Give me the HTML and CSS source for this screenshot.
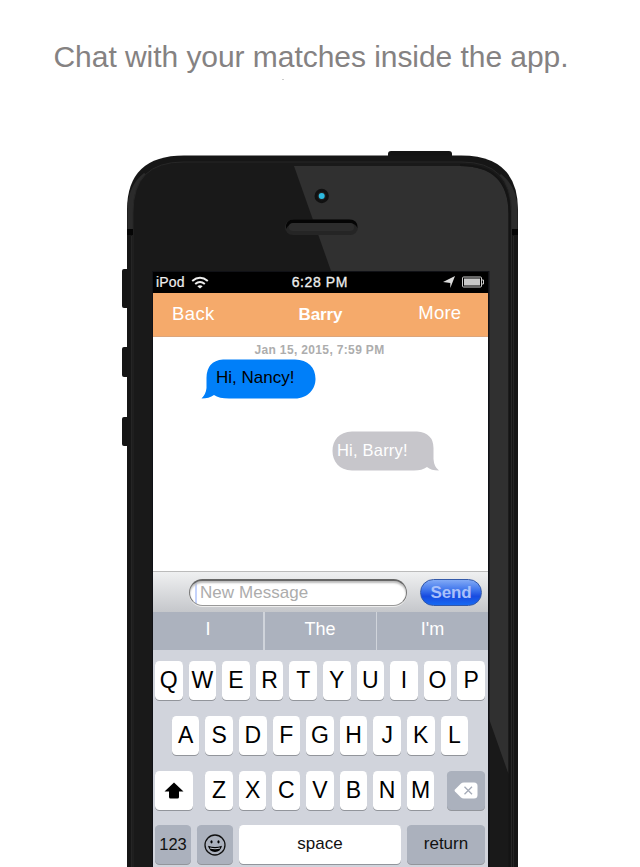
FILE: index.html
```html
<!DOCTYPE html>
<html lang="en">
<head>
<meta charset="utf-8">
<title>Chat</title>
<link rel="stylesheet" href="styles.css">
</head>
<body>
<h1 class="headline"><span>Chat with your matches inside the app.</span></h1>
<main class="phone">
  <svg class="case" width="400" height="717" viewBox="120 150 400 717" aria-hidden="true">
    <rect x="388" y="151" width="64" height="10" rx="3" fill="#141414"/>
    <g fill="#151515"><rect x="122" y="269" width="8" height="39" rx="2"/><rect x="122" y="347" width="8" height="30" rx="2"/><rect x="122" y="417" width="8" height="29" rx="2"/></g>
    <path d="M127 900V210Q127 155.500 184 155.500H461Q518 155.500 518 210V900Z" fill="#161616"/>
    <path d="M127.500 231V210Q127.500 186 144 173L149 176Q133 190 133 211V231ZM517.500 231V210Q517.500 187 501 174L497 178Q511 190 511 211V231Z" fill="#2b2b2b"/>
    <path d="M133 900V212Q133 162 183 162H462Q511.500 162 511.500 212V900" fill="#191919" stroke="#272727" stroke-width="1"/>
    <path d="M294 166H460Q508.500 166 508.500 213V774Z" fill="#303030"/>
    <path d="M460 165Q509 165 509.500 213V867" fill="none" stroke="#141414" stroke-width="2"/>
    <path d="M127 229h6v6h-6zM512 229h6v6h-6z" fill="#050505"/>
    <path d="M131.500 236V867M513.500 236V867" stroke="#252525"/>
    <rect x="285" y="219.500" width="73" height="15.500" rx="7.700" fill="#252525"/>
    <path d="M286 229Q285 219.500 294 219.500H349Q358 219.500 357.500 228Q355 223 349 223H295Q289 223 286 229Z" fill="#050505"/>
    <rect x="289" y="223" width="65" height="8" rx="4" fill="#2d2d2d"/>
    <circle cx="321.700" cy="196" r="7.200" fill="#111"/><circle cx="321.700" cy="196" r="4.300" fill="#202020"/><circle cx="321.700" cy="196" r="3" fill="#2ebbe0"/>
    <path d="M152 271H489.500V867H152Z" fill="#101116"/>
  </svg>
  <div class="screen">
    <div class="status">
      <span class="carrier">iPod</span>
      <svg class="wifi" width="18" height="13" viewBox="0 0 18 13"><g fill="none" stroke="#eee" stroke-width="2"><path d="M1.200 4.900Q9-1.500 16.800 4.900"/><path d="M4.200 8Q9 4 13.800 8"/></g><path d="M6.300 10.200Q9 8.200 11.700 10.200L9 12.600Z" fill="#eee"/></svg>
      <span class="clock">6:28 PM</span>
      <svg class="arrow" width="12" height="12" viewBox="0 0 12 12"><path d="M12 0L7.300 12V7L0 6Z" fill="#ddd"/></svg>
      <svg class="battery" width="23" height="12" viewBox="0 0 23 12"><rect x=".5" y="1" width="19" height="10" rx="1" fill="none" stroke="#ccc"/><rect x="2" y="2.500" width="16" height="7" fill="#c8c8c8"/><path d="M20 4h1.500v4H20" fill="none" stroke="#ccc"/></svg>
    </div>
    <header class="nav"><span class="back">Back</span><b><span>Barry</span></b><span class="more">More</span></header>
    <section class="messages">
      <time>Jan 15, 2015, 7:59 PM</time>
      <div class="bubble left">
        <svg width="116" height="40" viewBox="0 0 116 40"><path d="M22 .5Q5.500 2 5.500 19V29Q5 35 .5 39.500Q8 39.500 13 36Q18 39.500 28 39.500H94C107 39.500 114.500 30 114.500 20C114.500 8 107 1 94 .5Z" fill="#007ff9"/></svg>
        <span>Hi, Nancy!</span>
      </div>
      <div class="bubble right">
        <svg width="108" height="40" viewBox="0 0 108 40"><path d="M20 .5H85Q101.500 2 101.500 17V28Q102 36 107 39.500Q99 39.500 95 36Q90 39.500 82 39.500H20C7 39.500 .5 30 .5 20C.5 9 7 1 20 .5Z" fill="#c7c6cb"/></svg>
        <span>Hi, Barry!</span>
      </div>
    </section>
    <div class="composer"><div class="field"><span>New Message</span></div><div class="send"><span>Send</span></div></div>
    <div class="suggest"><span>I</span><span>The</span><span>I'm</span></div>
    <div class="keyboard">
      <div class="row"><i>Q</i><i>W</i><i>E</i><i>R</i><i>T</i><i>Y</i><i>U</i><i>I</i><i>O</i><i>P</i></div>
      <div class="row second"><i>A</i><i>S</i><i>D</i><i>F</i><i>G</i><i>H</i><i>J</i><i>K</i><i>L</i></div>
      <div class="row">
        <i class="shift"><svg width="20" height="17" viewBox="0 0 20 17"><path d="M10 .5L19.500 9.500H15V15Q15 16.500 13.500 16.500H6.500Q5 16.500 5 15V9.500H.5Z"/></svg></i>
        <i>Z</i><i>X</i><i>C</i><i>V</i><i>B</i><i>N</i><i>M</i>
        <i class="erase gray"><svg width="24" height="17" viewBox="0 0 24 17"><path d="M7 1.500Q8 .5 10 .5H20Q23.500 .5 23.500 4V13Q23.500 16.500 20 16.500H10Q8 16.500 7 15.500L1 9.500Q0 8.500 1 7.500Z" fill="#fff"/><path d="M10.500 4.800l7.500 7.500m0-7.500l-7.500 7.500" stroke="#a5abb8" stroke-width="1.300"/></svg></i>
      </div>
      <div class="row">
        <i class="gray wide small digits">123</i>
        <i class="gray wide"><svg width="22" height="22" viewBox="0 0 22 22"><circle cx="11" cy="11" r="10" fill="none" stroke="#111" stroke-width="1.300"/><ellipse cx="7.500" cy="7.800" rx="1.100" ry="1.600"/><ellipse cx="14.500" cy="7.800" rx="1.100" ry="1.600"/><path d="M4 11.800Q11 14.200 18 11.800Q16.500 18 11 18T4 11.800Z"/><path d="M6 14Q11 15.500 16 14" fill="none" stroke="#c3c7cf" stroke-width="1.200"/></svg></i>
        <i class="space small">space</i><i class="gray return small">return</i>
      </div>
    </div>
  </div>
</main>
</body>
</html>
```
FILE: styles.css
```css
* { box-sizing: border-box; }
html, body { margin: 0; height: 867px; overflow: hidden; }
body { background: #fff; font-family: "Liberation Sans", Arial, sans-serif; }
svg { display: block; flex: none; }
.headline { margin: 0; height: 155px; padding: 40px 0 0 53.500px; font-size: 30px; line-height: 34px; font-weight: 400; color: #858282; letter-spacing: -.05px; white-space: nowrap; }
.headline::after { content: ""; display: block; width: 2px; height: 1px; margin: 5px 0 0 228px; background: #ccc; }
.phone { position: relative; width: 391px; height: 712px; margin-left: 127px; padding: 117px 30px 0 26px; }
.case { position: absolute; left: -7px; top: -5px; }
.screen { position: relative; width: 335px; height: 595px; overflow: hidden; background: #fff; }
.status { display: flex; align-items: center; height: 21px; background: #000; color: #eee; font-size: 14px; padding: 0 3px 1px; }
.carrier { width: 35px; letter-spacing: .2px; -webkit-text-stroke: .2px #eee; }
.clock { margin-left: 83px; width: 58px; white-space: nowrap; letter-spacing: .6px; -webkit-text-stroke: .3px #eee; }
.arrow { margin-left: 94px; }
.battery { margin-left: 7px; }
.nav { display: grid; grid-template-columns: 1fr 1fr 1fr; height: 44px; background: #f5aa6b; border-bottom: 1px solid #dda57a; color: #fff; line-height: 42px; font-size: 18.500px; }
.nav b { text-align: center; font-size: 17px; line-height: 43px; letter-spacing: -.1px; }
.back { padding-left: 19px; letter-spacing: .4px; }
.more { padding-left: 42px; line-height: 40px; letter-spacing: .2px; }
.messages { height: 234px; padding-top: 6px; }
time { display: block; text-align: center; height: 16px; line-height: 14px; font-size: 12px; font-weight: 700; color: #adadad; letter-spacing: .35px; padding-right: 2px; }
.bubble { position: relative; height: 40px; font-size: 17px; }
.bubble span { position: absolute; top: 9px; left: 15px; line-height: 20px; white-space: nowrap; }
.left { width: 116px; margin-left: 48px; color: #000; }
.right { width: 108px; margin: 32px 0 0 179px; color: #fff; }
.right span { left: 5px; font-size: 16.500px; letter-spacing: .2px; }
.composer { height: 41px; display: flex; align-items: flex-start; padding: 7px 6px 0 36px; border-top: 1px solid #bbb; background: linear-gradient(#eff0f1, #c5c7cb); }
.field { width: 218px; height: 27px; border: 1px solid #777; border-top: 2px solid #666; border-bottom-color: #999; border-radius: 13.500px; background: linear-gradient(90deg, transparent 5px, #c5d3fb 5px, #c5d3fb 7px, transparent 7px) #fff; box-shadow: inset 0 2px 2px #bbb, 0 1px #eee; padding-left: 10px; line-height: 23px; font-size: 17px; letter-spacing: .05px; color: #acacac; }
.send { width: 62px; height: 27px; margin-left: 13px; border: 1px solid #3359a9; border-radius: 14px; background: linear-gradient(#82aaf6, #3f75ec 40%, #174be0 65%, #1769f2); color: #a9c0fa; font-size: 17px; font-weight: 700; text-align: center; line-height: 25px; letter-spacing: -.2px; }
.suggest { display: grid; grid-template-columns: 110px 111px 1fr; gap: 1.500px; height: 38px; background: #d0d4db; }
.suggest span { background: #acb2be; color: #fff; text-align: center; line-height: 34px; font-size: 18px; }
.keyboard { height: 217px; background: #d1d4dc; padding: 11px 2px 0; }
.row { display: flex; gap: 6px; height: 39px; margin-bottom: 15.800px; padding: 0; }
.row i { flex: none; width: 27.600px; height: 39px; display: flex; align-items: center; justify-content: center; border-radius: 4.500px; background: #fff; box-shadow: 0 1px 0 #92959b; color: #000; font-style: normal; font-size: 23px; }
.second { padding-left: 16.800px; }
.row .shift { width: 38px; margin-right: 6.300px; }
.row .erase { width: 38px; margin-left: 6.300px; }
.row .gray { background: #abb1bd; }
.row .wide { width: 36px; }
.row .space { width: 162px; }
.row .return { width: 78px; }
.row .small { font-size: 17px; padding-bottom: 2px; color: #111; }
.row .digits { font-size: 16.500px; padding-bottom: 0; }
```
